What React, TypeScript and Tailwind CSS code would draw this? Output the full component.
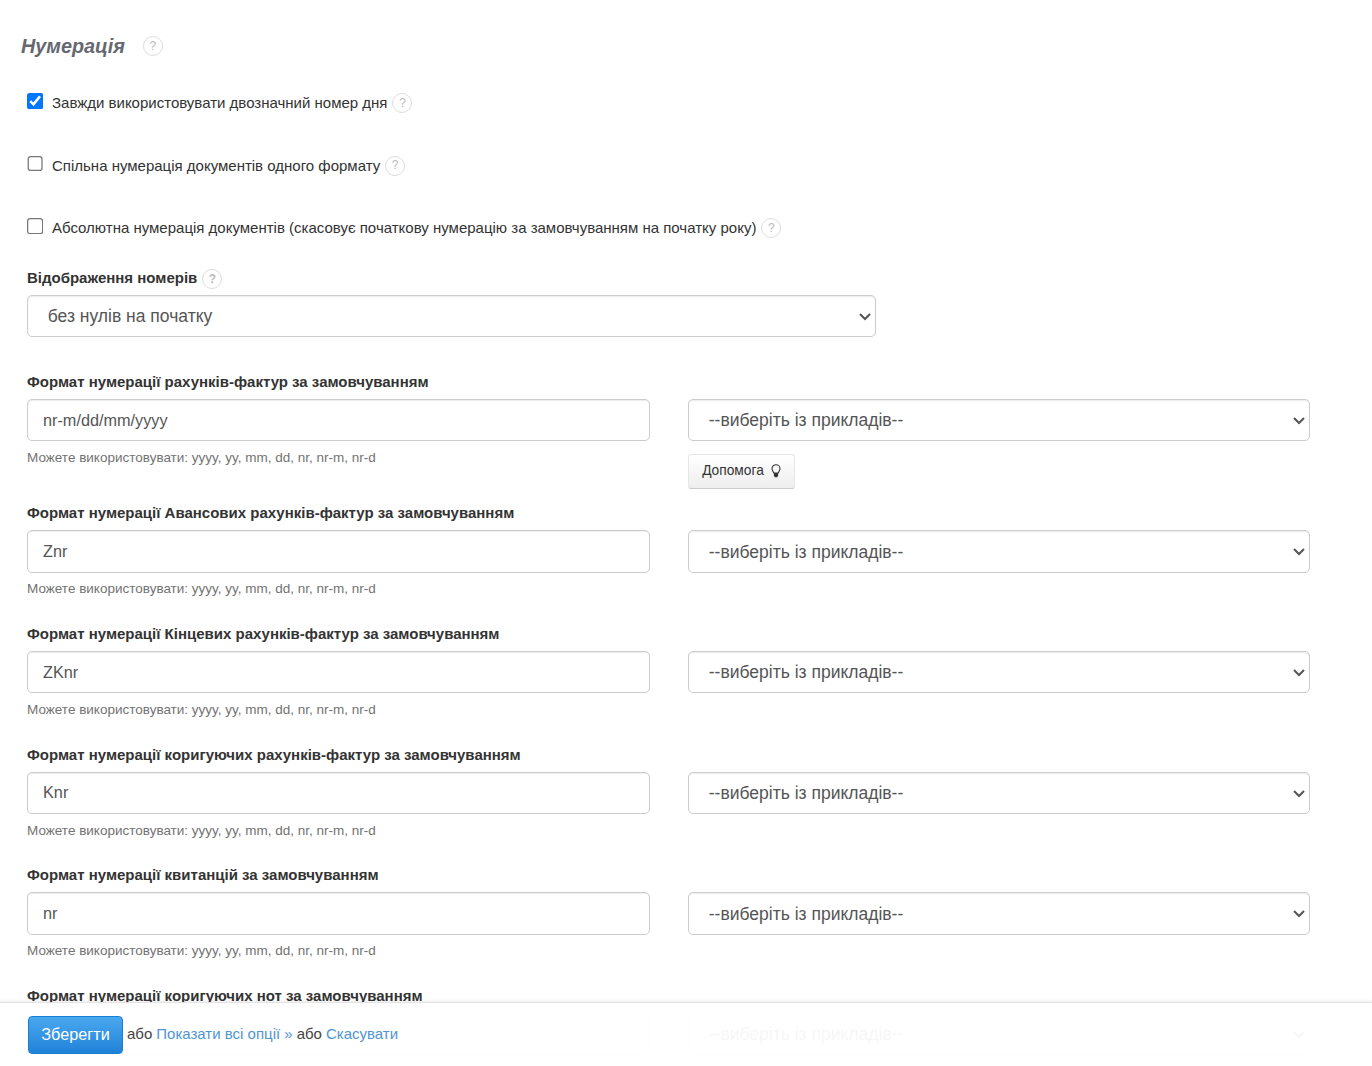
import React from "react";

const font = "font-['Liberation_Sans',Arial,sans-serif]";
const hint = "Можете використовувати: yyyy, yy, mm, dd, nr, nr-m, nr-d";

const formats = [
  { label: "Формат нумерації рахунків-фактур за замовчуванням", value: "nr-m/dd/mm/yyyy", help: true },
  { label: "Формат нумерації Авансових рахунків-фактур за замовчуванням", value: "Znr" },
  { label: "Формат нумерації Кінцевих рахунків-фактур за замовчуванням", value: "ZKnr" },
  { label: "Формат нумерації коригуючих рахунків-фактур за замовчуванням", value: "Knr" },
  { label: "Формат нумерації квитанцій за замовчуванням", value: "nr" },
  { label: "Формат нумерації коригуючих нот за замовчуванням", value: "" },
];

function Hint({ className = "" }: { className?: string }) {
  return (
    <span
      className={`inline-flex h-5 w-5 shrink-0 items-center justify-center rounded-full border border-[#dddddd] bg-white text-[12px] text-[#bbbbbb] ${className}`}
    >
      ?
    </span>
  );
}

function CheckRow({ label, checked = false }: { label: string; checked?: boolean }) {
  return (
    <div className="flex h-[21px] items-start">
      <input type="checkbox" defaultChecked={checked} className="mt-[-0.8px] h-[13.2px] w-[13.2px] accent-[#0075ff] [zoom:1.25]" />
      <span className="ml-[8.5px] mt-[-2px] flex items-center text-[15px] leading-[21px] text-[#333333]">
        {label}
        <Hint className="ml-[5px] mt-[1px]" />
      </span>
    </div>
  );
}

function Picker({ className = "", children }: { className?: string; children: React.ReactNode }) {
  return (
    <select
      className={`block h-[34px] rounded-[4px] border border-[#cccccc] bg-white pl-[11.8px] pr-[9.6px] text-[14px] text-[#555555] shadow-[inset_0_1px_1px_rgba(0,0,0,0.075)] [zoom:1.25] ${className}`}
    >
      {children}
    </select>
  );
}

// glyph from the help button: round bulb outline on a solid base
function Bulb() {
  return (
    <svg viewBox="0 0 10 14" className="h-[14px] w-[10px]">
      <path
        d="M5 .8a4 4 0 0 0-4 4c0 1.700 1.300 2.500 1.800 4.200h4.400c.5-1.700 1.800-2.500 1.800-4.200a4 4 0 0 0-4-4z"
        fill="none"
        stroke="#333333"
        strokeWidth="1.100"
      />
      <path d="M2.900 9h4.200v2.400l-.9 1.800h-2.400l-.9-1.800z" fill="#333333" />
    </svg>
  );
}

function FormatRow({ label, value, help }: { label: string; value: string; help?: boolean }) {
  return (
    <div className={help ? "h-[131.5px]" : "h-[120.7px]"}>
      <div className="text-[15px] font-bold leading-[21px] text-[#333333]">{label}</div>
      <div className="mt-[7px] flex items-start gap-[38px]">
        <div className="w-[623px]">
          <input
            readOnly
            value={value}
            className="h-[42.5px] w-full rounded-[5px] border border-[#cccccc] bg-white px-[15px] text-[16.25px] text-[#555555] shadow-[inset_0_1px_1px_rgba(0,0,0,0.075)] outline-none"
          />
          {value && <p className="mt-[6.5px] text-[13.5px] leading-[19px] text-[#737373]">{hint}</p>}
        </div>
        <div className="w-[622px]">
          <Picker className="w-[497.6px]">
            <option>--виберіть із прикладів--</option>
          </Picker>
          {help && (
            <button
              type="button"
              className="mt-[12.6px] flex h-[35px] w-[107px] items-center justify-center gap-[7px] rounded-[3px] border border-[#e6e6e6] border-b-[#cccccc] bg-gradient-to-b from-white to-[#eeeeee] text-[13.75px] text-[#333333]"
            >
              Допомога
              <Bulb />
            </button>
          )}
        </div>
      </div>
    </div>
  );
}

export default function App() {
  return (
    <div className={`relative h-[1066px] overflow-hidden bg-white ${font}`}>
      <div className="pl-[21px] pt-[37px]">
        <div className="flex h-[20px] items-center">
          <h2 className="text-[19.8px] font-bold italic text-[#666870]">Нумерація</h2>
          <Hint className="ml-[18px] mt-[-2px]" />
        </div>
      </div>

      <div className="pl-[27px] pt-[37px]">
        <div className="flex flex-col gap-[41.5px]">
          <CheckRow checked label="Завжди використовувати двозначний номер дня" />
          <CheckRow label="Спільна нумерація документів одного формату" />
          <CheckRow label="Абсолютна нумерація документів (скасовує початкову нумерацію за замовчуванням на початку року)" />
        </div>

        <div className="mt-[28px] flex h-[21px] items-center text-[15px] font-bold text-[#333333]">
          Відображення номерів
          <Hint className="ml-[5px] mt-[1px]" />
        </div>
        <Picker className="mt-[4.64px] w-[679.2px]">
          <option>без нулів на початку</option>
        </Picker>

        <div className="mt-[33.5px]">
          {formats.map((f) => (
            <FormatRow key={f.label} label={f.label} value={f.value} help={f.help} />
          ))}
        </div>
      </div>

      <div className="absolute inset-x-0 bottom-0 flex h-[64px] items-center border-t border-[#e2e2e2] bg-white/95 pl-[28px] text-[15px] text-[#444444] shadow-[0_-1px_3px_rgba(0,0,0,0.08)]">
        <button
          type="button"
          className="h-[38px] w-[95px] rounded-[4px] border border-[#1b7fd1] bg-gradient-to-b from-[#4aa8f0] to-[#1f82d8] text-[16.25px] text-white"
        >
          Зберегти
        </button>
        <span className="ml-1">або</span>
        <a href="#" className="ml-1 text-[#4f94d4]">
          Показати всі опції »
        </a>
        <span className="ml-1">або</span>
        <a href="#" className="ml-1 text-[#4f94d4]">
          Скасувати
        </a>
      </div>
    </div>
  );
}
